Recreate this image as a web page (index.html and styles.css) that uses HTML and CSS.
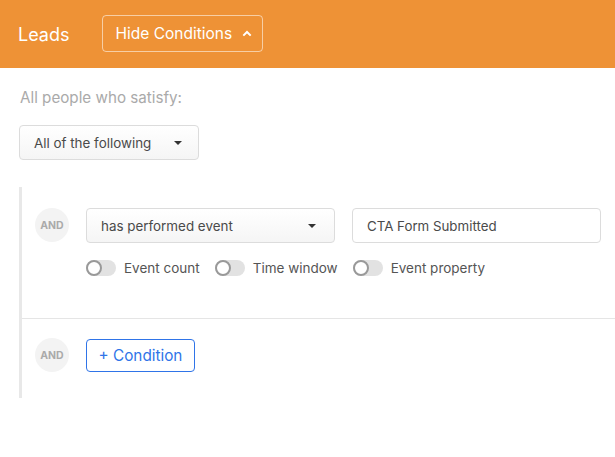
FILE: index.html
```html
<!DOCTYPE html>
<html>
<head>
<meta charset="utf-8">
<link rel="stylesheet" href="styles.css">
</head>
<body>
<header class="topbar">
  <span class="title">Leads</span>
  <button class="hide-btn">Hide Conditions
    <svg class="chev" width="10" height="7" viewBox="0 0 10 7"><path d="M1.3 5.6 L5 2 L8.7 5.6" fill="none" stroke="#fff" stroke-width="2"/></svg>
  </button>
</header>
<main class="content">
  <p class="intro">All people who satisfy:</p>
  <div class="select select-small">
    <span>All of the following</span>
    <span class="caret"></span>
  </div>
  <section class="conditions">
    <div class="cond-row">
      <div class="and">AND</div>
      <div class="cond-body">
        <div class="fields">
          <div class="select select-wide">
            <span>has performed event</span>
            <span class="caret"></span>
          </div>
          <div class="input">CTA Form Submitted</div>
        </div>
        <div class="toggles">
          <label class="toggle"><span class="switch"><span class="knob"></span></span>Event count</label>
          <label class="toggle"><span class="switch"><span class="knob"></span></span>Time window</label>
          <label class="toggle"><span class="switch"><span class="knob"></span></span>Event property</label>
        </div>
      </div>
    </div>
    <div class="add-row">
      <div class="and">AND</div>
      <button class="add-btn">+ Condition</button>
    </div>
  </section>
</main>
</body>
</html>
```
FILE: styles.css
```css
* { box-sizing: border-box; }
body {
  margin: 0;
  font-family: "Inter", "Noto Sans", "Liberation Sans", sans-serif;
  background: #fff;
  color: #444;
}
.topbar {
  height: 68px;
  background: #ee9236;
  display: flex;
  align-items: center;
  padding-left: 18px;
  gap: 33px;
}
.title {
  color: #fff;
  font-size: 18px;
}
.hide-btn {
  height: 37px;
  width: 161px;
  padding: 0 0 0 12px;
  margin-top: -2px;
  background: transparent;
  border: 1px solid rgba(255,255,255,0.55);
  border-radius: 4px;
  color: #fff;
  font: inherit;
  font-size: 15.5px;
  display: flex;
  align-items: center;
  gap: 10px;
}
.content {
  padding-left: 19px;
}
.intro {
  margin: 20px 0 0 1px;
  font-size: 15.2px;
  color: #aaa;
  line-height: 20px;
}
.select {
  height: 35px;
  border: 1px solid #dcdcdc;
  border-radius: 4px;
  background: linear-gradient(#fff, #f5f5f5);
  display: flex;
  align-items: center;
  justify-content: space-between;
  padding: 0 16px 0 14px;
  font-size: 13.4px;
  color: #4a4a4a;
}
.select-small {
  width: 180px;
  margin-top: 17px;
}
.caret {
  width: 0;
  height: 0;
  border-left: 4.5px solid transparent;
  border-right: 4.5px solid transparent;
  border-top: 4px solid #333;
}
.conditions {
  margin-top: 27px;
  border-left: 3px solid #e8e8e8;
}
.cond-row {
  display: flex;
  gap: 17px;
  padding: 21px 0 42px 13px;
  border-bottom: 1px solid #e5e5e5;
}
.and {
  width: 34px;
  height: 34px;
  border-radius: 50%;
  background: #f3f3f3;
  color: #aaa;
  font-size: 10.5px;
  font-weight: 700;
  display: flex;
  align-items: center;
  justify-content: center;
  flex-shrink: 0;
}
.fields {
  display: flex;
  gap: 17px;
}
.select-wide {
  width: 249px;
  padding-right: 18px;
}
.input {
  width: 249px;
  height: 35px;
  border: 1px solid #dcdcdc;
  border-radius: 4px;
  display: flex;
  align-items: center;
  padding-left: 14px;
  font-size: 13.3px;
  color: #4a4a4a;
}
.toggles {
  display: flex;
  margin-top: 17px;
  gap: 15px;
}
.toggle {
  display: flex;
  align-items: center;
  gap: 8px;
  font-size: 13.5px;
  color: #555;
  height: 16px;
}
.switch {
  width: 30px;
  height: 16px;
  border-radius: 8px;
  background: #e2e2e2;
  position: relative;
}
.knob {
  position: absolute;
  left: 0;
  top: 0;
  width: 16px;
  height: 16px;
  border-radius: 50%;
  background: #fff;
  border: 2px solid #999;
}
.add-row {
  display: flex;
  align-items: center;
  gap: 17px;
  padding: 19px 0 26px 13px;
}
.add-btn {
  height: 33px;
  width: 109px;
  border: 1px solid #2f74e8;
  border-radius: 4px;
  background: #fff;
  color: #2f74e8;
  font: inherit;
  font-size: 15.3px;
}
```
